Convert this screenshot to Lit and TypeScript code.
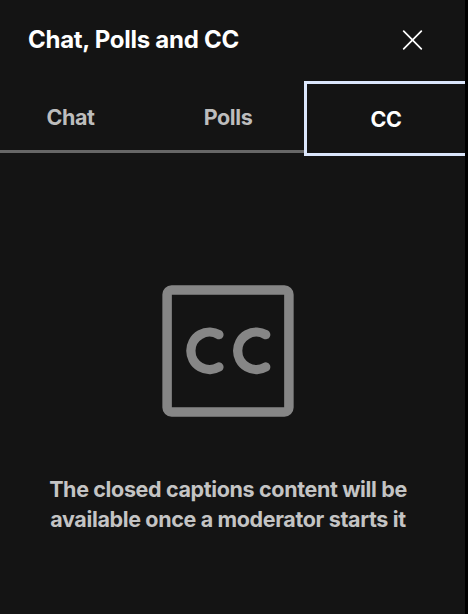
import { LitElement, html, css } from "lit";
import { customElement, state } from "lit/decorators.js";
import { classMap } from "lit/directives/class-map.js";

@customElement("app-root")
class AppRoot extends LitElement {
  @state() private active = "CC";

  static styles = css`
    :host {
      display: flex;
      height: 614px;
      background: #000;
      font-family: Inter, "Liberation Sans", sans-serif;
      -webkit-font-smoothing: antialiased;
    }
    .panel {
      flex: 1;
      margin-right: 3px;
      background: #141414;
      display: flex;
      flex-direction: column;
      overflow: hidden;
    }
    .header {
      display: flex;
      align-items: center;
      justify-content: space-between;
      height: 81px;
      box-sizing: border-box;
      padding: 0 42px 2px 28px;
    }
    .title {
      margin: 0;
      font-size: 24px;
      font-weight: 700;
      letter-spacing: -0.27px;
      color: #fff;
      white-space: nowrap;
    }
    .close {
      display: flex;
      padding: 0;
      border: 0;
      background: none;
    }
    .tabs {
      display: grid;
      grid-template-columns: 146px 158px 1fr;
      height: 75px;
    }
    .tab {
      font: inherit;
      font-size: 21.5px;
      font-weight: 700;
      letter-spacing: -0.4px;
      color: #bdbdbd;
      background: none;
      border: 0;
      border-bottom: 3px solid #676767;
      margin-bottom: 3px;
      padding: 2px 5px 0 0;
    }
    .tab + .tab {
      padding: 2px 0 0 6px;
    }
    .tab.active {
      color: #fff;
      border: 3px solid #dbe6fb;
      border-right: 0;
      margin: 0;
      padding: 1px 0 0;
    }
    .empty {
      display: flex;
      flex-direction: column;
      align-items: center;
      padding: 129px 9px 0 0;
    }
    .message {
      margin: 57px 0 0;
      font-size: 21.5px;
      line-height: 30px;
      font-weight: 700;
      letter-spacing: -0.36px;
      color: #c4c4c4;
      text-align: center;
      white-space: nowrap;
    }
  `;

  render() {
    return html`
      <section class="panel">
        <header class="header">
          <h1 class="title">Chat, Polls and CC</h1>
          <button class="close" aria-label="Close">
            <svg width="21" height="20" viewBox="0 0 21 20" fill="none" stroke="#fff" stroke-width="1.7" stroke-linecap="round">
              <path d="M1.7 1.2 19.3 18.8M19.3 1.2 1.7 18.8" />
            </svg>
          </button>
        </header>
        <nav class="tabs">
          ${["Chat", "Polls", "CC"].map(
            (t) => html`<button class=${classMap({ tab: true, active: this.active === t })} @click=${() => (this.active = t)}>${t}</button>`
          )}
        </nav>
        <main class="empty">
          <svg width="132" height="132" viewBox="0 0 132 132" fill="none" stroke="#868686">
            <rect x="5.1" y="5.1" width="121.8" height="121.8" rx="4.5" stroke-width="9.5" />
            <path d="M56.9 49.6A18.7 18.7 0 1 0 56.9 82M103.7 49.6A18.7 18.7 0 1 0 103.7 82" stroke-width="9.3" stroke-linecap="round" />
          </svg>
          <p class="message">The closed captions content will be<br />available once a moderator starts it</p>
        </main>
      </section>
    `;
  }
}
